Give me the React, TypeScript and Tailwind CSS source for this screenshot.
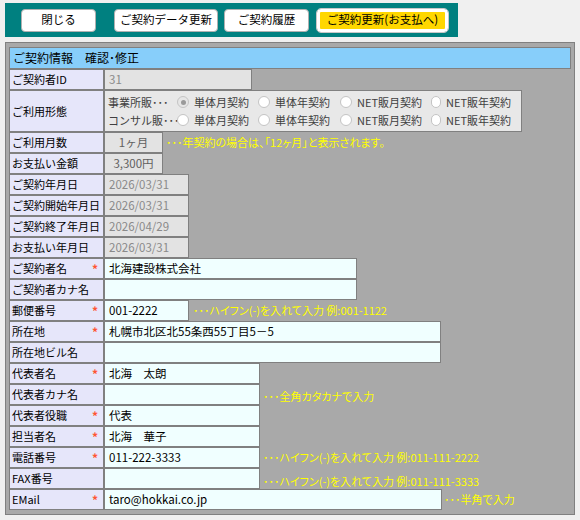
import React from "react";

const font = "font-['Noto_Sans_CJK_JP','Noto_Sans',sans-serif]";

function Label({ text, req }: { text: string; req?: boolean }) {
  return (
    <div className="flex h-full w-[95px] shrink-0 items-center justify-between border border-[#808080] bg-[#e6e6fa] pl-[2px] pr-[5px] text-[11px] leading-none text-black">
      <span className="whitespace-nowrap">{text}</span>
      {req && <span className="text-[12px] font-bold text-[#ff5533]">*</span>}
    </div>
  );
}

function ReadCell({
  value,
  width,
  center,
  dark,
}: {
  value: string;
  width: string;
  center?: boolean;
  dark?: boolean;
}) {
  return (
    <div
      className={`flex h-full shrink-0 items-center border border-[#808080] bg-[#e3e3e3] px-[4px] text-[11.5px] leading-none ${width} ${center ? "justify-center" : ""} ${dark ? "text-[#606060]" : "text-[#8a8a8a]"}`}
    >
      {value}
    </div>
  );
}

function InputCell({ value, width }: { value?: string; width: string }) {
  return (
    <div
      className={`flex h-full shrink-0 items-center border border-[#808080] bg-[#f0ffff] px-[4px] text-[11.5px] leading-none text-black whitespace-nowrap ${width}`}
    >
      {value}
    </div>
  );
}

function Hint({ text, className = "" }: { text: string; className?: string }) {
  return (
    <span
      className={`whitespace-nowrap text-[11px] leading-none text-[#ffff00] [font-feature-settings:'palt'] ${className}`}
    >
      {text}
    </span>
  );
}

function Radio({ label, checked, width }: { label: string; checked?: boolean; width: string }) {
  return (
    <div className={`flex shrink-0 items-center gap-[5px] ${width}`}>
      <span
        className={`flex h-[12px] w-[12px] items-center justify-center rounded-full border border-[#c4c4c4] ${checked ? "bg-[#e6e6e6]" : "bg-white"}`}
      >
        {checked && <span className="h-[5px] w-[5px] rounded-full bg-[#9a9a9a]" />}
      </span>
      <span className="whitespace-nowrap">{label}</span>
    </div>
  );
}

function PlanLine({ prefix, first }: { prefix: string; first?: boolean }) {
  return (
    <div className="flex h-[18px] items-center text-[11px] leading-none text-[#404040]">
      <span className="w-[69px] shrink-0 whitespace-nowrap">{prefix}</span>
      <Radio label="単体月契約" checked={first} width="w-[81px]" />
      <Radio label="単体年契約" width="w-[82px]" />
      <Radio label="NET販月契約" width="w-[91px]" />
      <Radio label="NET販年契約" width="w-[80px]" />
    </div>
  );
}

export default function App() {
  return (
    <div className={`min-h-[520px] bg-[#f0f0f0] pl-[5px] pt-[3px] ${font}`}>
      <div className="flex h-[34px] w-[453px] items-center bg-[#008080] pl-[16px] text-[11.5px] leading-none text-black">
        <button className="h-[23px] w-[75px] rounded-[4px] border border-[#b0b0b0] bg-white">
          閉じる
        </button>
        <button className="ml-[18px] h-[23px] w-[104px] rounded-[4px] border border-[#b0b0b0] bg-white">
          ご契約データ更新
        </button>
        <button className="ml-[6px] h-[23px] w-[85px] rounded-[4px] border border-[#b0b0b0] bg-white">
          ご契約履歴
        </button>
        <button className="ml-[8px] h-[23px] w-[131px] rounded-[4px] border-[3px] border-white bg-[#ffd700] outline outline-1 outline-[#c8c8c8]">
          ご契約更新(お支払へ)
        </button>
      </div>

      <div className="mt-[5px] h-[473px] w-[570px] border border-[#808080] bg-[#a9a9a9] px-[3px] pt-[4px]">
        <div className="flex h-[22px] w-[562px] items-center border border-[#808080] bg-[#87cefa] pl-[3px] text-[12px] leading-none text-black">
          ご契約情報　確認･修正
        </div>

        <div className="flex h-[21px] items-center">
          <Label text="ご契約者ID" />
          <ReadCell value="31" width="w-[148px]" />
        </div>

        <div className="flex h-[42px] items-center">
          <Label text="ご利用形態" />
          <div className="flex h-full w-[418px] shrink-0 flex-col justify-center border border-[#808080] bg-[#e8e8e8] pl-[3px]">
            <PlanLine prefix="事業所販･･･" first />
            <PlanLine prefix="コンサル販･･･" />
          </div>
        </div>

        <div className="flex h-[21px] items-center">
          <Label text="ご利用月数" />
          <ReadCell value="1ヶ月" width="w-[59px]" center dark />
          <Hint text="･･･年契約の場合は、「12ヶ月」と表示されます。" className="ml-[3px]" />
        </div>
        <div className="flex h-[21px] items-center">
          <Label text="お支払い金額" />
          <ReadCell value="3,300円" width="w-[59px]" center dark />
        </div>
        <div className="flex h-[21px] items-center">
          <Label text="ご契約年月日" />
          <ReadCell value="2026/03/31" width="w-[85px]" />
        </div>
        <div className="flex h-[21px] items-center">
          <Label text="ご契約開始年月日" />
          <ReadCell value="2026/03/31" width="w-[85px]" />
        </div>
        <div className="flex h-[21px] items-center">
          <Label text="ご契約終了年月日" />
          <ReadCell value="2026/04/29" width="w-[85px]" />
        </div>
        <div className="flex h-[21px] items-center">
          <Label text="お支払い年月日" />
          <ReadCell value="2026/03/31" width="w-[85px]" />
        </div>

        <div className="flex h-[21px] items-center">
          <Label text="ご契約者名" req />
          <InputCell value="北海建設株式会社" width="w-[253px]" />
        </div>
        <div className="flex h-[21px] items-center">
          <Label text="ご契約者カナ名" />
          <InputCell width="w-[253px]" />
        </div>
        <div className="flex h-[21px] items-center">
          <Label text="郵便番号" req />
          <InputCell value="001-2222" width="w-[85px]" />
          <Hint text="･･･ハイフン(-)を入れて入力 例:001-1122" className="ml-[4px]" />
        </div>
        <div className="flex h-[21px] items-center">
          <Label text="所在地" req />
          <InputCell value="札幌市北区北55条西55丁目5－5" width="w-[337px]" />
        </div>
        <div className="flex h-[21px] items-center">
          <Label text="所在地ビル名" />
          <InputCell width="w-[337px]" />
        </div>

        <div className="flex h-[21px] items-center">
          <Label text="代表者名" req />
          <InputCell value="北海　太朗" width="w-[156px]" />
        </div>
        <div className="flex h-[21px] items-center">
          <Label text="代表者カナ名" />
          <InputCell width="w-[156px]" />
          <Hint text="･･･全角カタカナで入力" className="ml-[3px] pt-[4px]" />
        </div>
        <div className="flex h-[21px] items-center">
          <Label text="代表者役職" req />
          <InputCell value="代表" width="w-[156px]" />
        </div>
        <div className="flex h-[21px] items-center">
          <Label text="担当者名" req />
          <InputCell value="北海　華子" width="w-[156px]" />
        </div>
        <div className="flex h-[21px] items-center">
          <Label text="電話番号" req />
          <InputCell value="011-222-3333" width="w-[156px]" />
          <Hint text="･･･ハイフン(-)を入れて入力 例:011-111-2222" className="ml-[3px]" />
        </div>
        <div className="flex h-[21px] items-center">
          <Label text="FAX番号" />
          <InputCell width="w-[156px]" />
          <Hint text="･･･ハイフン(-)を入れて入力 例:011-111-3333" className="ml-[3px] pt-[5px]" />
        </div>
        <div className="flex h-[21px] items-center">
          <Label text="EMail" req />
          <InputCell value="taro@hokkai.co.jp" width="w-[338px]" />
          <Hint text="･･･半角で入力" className="ml-[2px]" />
        </div>
      </div>
    </div>
  );
}
